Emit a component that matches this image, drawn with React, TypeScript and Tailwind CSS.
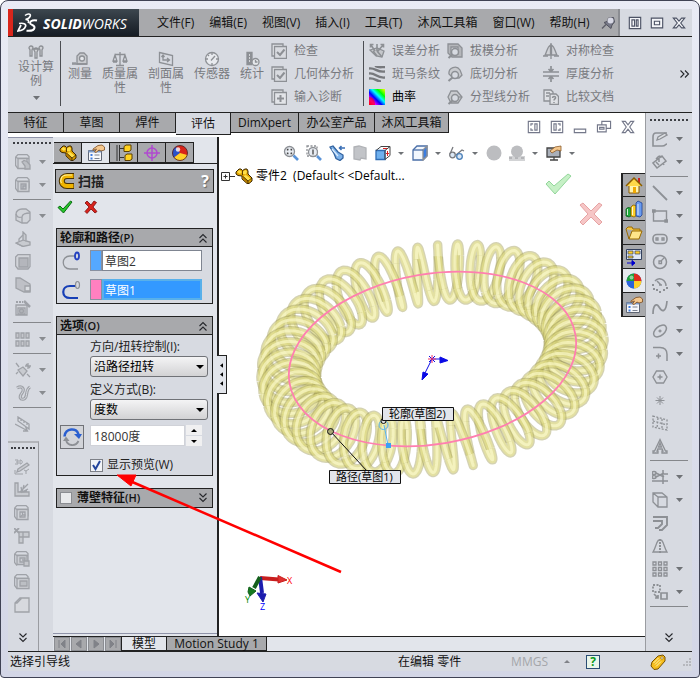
import type { ReactNode } from 'react';

const FONT = "font-['Open_Sans','Noto_Sans_CJK_SC',sans-serif]";

interface IconProps {
  children: ReactNode;
  className?: string;
  color?: string;
}

const Icon = ({ children, className = 'w-4 h-4', color = '#8d9095' }: IconProps) => (
  <svg viewBox="0 0 16 16" className={`${className} shrink-0`} fill="none" stroke={color} strokeWidth="1.3">
    {children}
  </svg>
);

const Caret = () => (
  <svg viewBox="0 0 7 4" className="w-[7px] h-1 shrink-0" fill="#6f7276">
    <path d="M0 0h7L3.5 4z" />
  </svg>
);

const DoubleChevron = ({ up = false }: { up?: boolean }) => (
  <svg viewBox="0 0 10 10" className="w-2.5 h-2.5 shrink-0" fill="none" stroke="#26282c" strokeWidth="1.1">
    {up ? <path d="M1.5 5L5 1.5 8.5 5M1.5 9.5L5 6l3.5 3.5" /> : <path d="M1.5.5L5 4 8.5.5M1.5 5L5 8.500l3.500-3.500" />}
  </svg>
);

/* ---------- shared drawings ---------- */

const PartGlyph = () => (
  <svg viewBox="0 0 18 16" className="w-[18px] h-4 shrink-0" strokeLinejoin="round">
    <path d="M1 4l3-3h2l1.500 1.500L10 1h2l1 2v3l4 4v3l-3 2.500h-2L7 11V8L3 7.500 1 6z" fill="#e0a200" stroke="#3b2600" />
    <path d="M2 4l2.500-2 2.500 2-2 2zM8 3.500L10.500 2l1.500 1.500-1 3-3-.5zM8 8l3-1 5 4-2.500 2z" fill="#ffe04a" />
    <path d="M13 13v2.500L7.500 11V8.500z" fill="#b57c00" />
    <path d="M7.500 3v4M7.500 8l5.500 5v2.500M13 13l4-3" fill="none" stroke="#3b2600" strokeWidth=".8" />
  </svg>
);

const HandSheet = () => (
  <svg viewBox="0 0 18 18" className="w-[18px] h-[18px] shrink-0" strokeWidth="1">
    <path d="M1.500 6.500h13v10h-13z" fill="#f7f8fb" stroke="#5f6674" />
    <path d="M1.500 6.500h13v2h-13z" fill="#7f9cc8" />
    <path d="M3.500 10h2v2h-2zM3.500 13.500h2v2h-2z" fill="#3d7be0" />
    <path d="M7.500 11h5M7.500 14.500h5" stroke="#7b8290" />
    <path d="M6 5l5-3.500 4-.5 2.500 2v3l-3.500 1-2-1-3 2.500-1.500-.5 2-3-2 .5-1.500 1z" fill="#f5c88e" stroke="#7a4a1d" strokeWidth=".8" />
  </svg>
);

const Beachball = () => (
  <svg viewBox="0 0 18 18" className="w-[18px] h-[18px] shrink-0">
    <circle cx="9" cy="9" r="7.500" fill="#2f6fe0" />
    <path d="M9 9L9 1.500A7.500 7.500 0 0 0 1.500 9z" fill="#1fa037" />
    <path d="M9 9V1.500A7.500 7.500 0 0 1 16.500 9z" fill="#e02b1d" />
    <path d="M9 9H1.500A7.500 7.500 0 0 0 9 16.500z" fill="#2b62d9" />
    <path d="M9 9h7.500A7.500 7.500 0 0 1 9 16.500z" fill="#ffd028" />
    <circle cx="6.500" cy="5.500" r="2" fill="#fff" opacity=".5" />
  </svg>
);

const TricolorBall = () => (
  <svg viewBox="0 0 18 18" className="w-[18px] h-[18px] shrink-0">
    <circle cx="9" cy="9" r="7.500" fill="#d8241a" />
    <path d="M9 9L5 2.700A7.500 7.500 0 0 0 3 13.500z" fill="#2b52c9" />
    <path d="M9 9l7.300 2A7.500 7.500 0 0 1 3 13.500z" fill="#ffd028" />
    <circle cx="9" cy="9" r="7.500" fill="none" stroke="#4a2020" strokeWidth=".8" />
    <circle cx="7" cy="5.500" r="2.200" fill="#fff" opacity=".8" />
  </svg>
);

/* ---------- title bar ---------- */

const menus = ['文件(F)', '编辑(E)', '视图(V)', '插入(I)', '工具(T)', '沐风工具箱', '窗口(W)', '帮助(H)'];

const TitleBar = () => (
  <header className="flex h-7 bg-[#a8a9ac] border-b border-[#222] shrink-0">
    <div className="flex items-center w-[131px] shrink-0 border-l-[5px] border-[#d9261c] bg-linear-to-b from-[#3d474f] to-[#161c24] text-white">
      <svg viewBox="0 0 22 22" className="w-[22px] h-[22px] ml-1 shrink-0" fill="none" stroke="#fff">
        <path d="M8 3.500C10.500 1.500 14 1.500 13.300 4 12.800 5.800 10.500 7 8.500 7.500c3 0 3.800 1.500 2.500 3.500" strokeWidth="1.600" />
        <path d="M2 11.500c4.500-.7 7.500.3 6.500 3C7.500 17.300 4 18.800 1 19l3-6" strokeWidth="1.700" />
        <path d="M20 8.500c-3-.8-6.500 0-7 2.200-.5 2.300 5 2.200 4.500 5-.4 2.500-4 3.300-8 3" strokeWidth="2" />
      </svg>
      <span className="ml-1 font-['Open_Sans'] italic text-sm leading-none pt-0.5 whitespace-nowrap">
        <b>SOLID</b>WORKS
      </span>
    </div>
    <nav className="flex items-center gap-[15px] pl-[18px] flex-1 whitespace-nowrap">
      {menus.map((menu) => (
        <button key={menu} className="text-[#111]">{menu}</button>
      ))}
      <svg viewBox="0 0 14 14" className="w-3.5 h-3.5 -ml-1 shrink-0">
        <path d="M1 12.500l4-4" stroke="#5d5e68" strokeWidth="1.500" />
        <path d="M3 6.500l3-1L7.500 2l5-.5 1 4.500-2.500 3-1 3.500z" fill="#777988" stroke="#53545f" />
        <circle cx="9.500" cy="4.500" r="3" fill="#d7d8e4" />
      </svg>
    </nav>
    <div className="flex items-center justify-around w-[74px] px-2 gap-2 shrink-0 bg-[#d7dae1] border-l-2 border-[#8b8d92]">
      <Icon className="w-3.5 h-3.5" color="#4d5365">
        <path d="M1.500 1.500h13v13h-13zM4.500 4.500h3v7h-3zM9.500 4.500h2v7h-2z" fill="#f4f5f8" />
      </Icon>
      <Icon className="w-3.5 h-3.5" color="#4d5365">
        <path d="M1.500 2.500h13v11h-13zM5 6h6v4H5z" fill="#f4f5f8" />
      </Icon>
      <Icon className="w-3.5 h-3.5" color="#4d5365">
        <path d="M1.500 2.500h3.500L8 5.800l3-3.300h3.500L10 8l4.500 5.500H11L8 10.200 5 13.500H1.500L6 8z" fill="#f4f5f8" />
      </Icon>
    </div>
  </header>
);

/* ---------- ribbon ---------- */

const magnifier = (
  <>
    <circle cx="8" cy="9" r="3.500" fill="#d7dae1" strokeWidth="1.500" />
    <path d="M5.500 11.500L1.500 15" strokeWidth="2" />
  </>
);

const bigTools: { label: string; width: string; icon: ReactNode }[] = [
  { label: '测量', width: 'w-[38px]', icon: <><path d="M5 13V5l3-3h4l3 3v8z" fill="#c9cbcf" /><circle cx="10" cy="7.500" r="2.500" fill="#e4e6ea" /><path d="M0 13h15M1 11v2M3 11v2" /></> },
  { label: '质量属性', width: 'w-[42px]', icon: <path d="M8 1v13M3 3.500h10M4 14.500h8M3 4L1 10h4zM13 4l-2 6h4zM1 11h4M11 11h4" /> },
  { label: '剖面属性', width: 'w-[50px]', icon: <path d="M1.500 1.500l13 3v10l-13-3zM5 5v4h6M9 7l2.500 2L9 11M3.500 6L5 4l1.500 2" /> },
  { label: '传感器', width: 'w-[42px]', icon: <><circle cx="8" cy="8" r="6.500" fill="#e8eaee" /><path d="M7 9.500L11 5M8 2v2M2 8h2M12 8h2M4 4l1 1M8 12v2" /></> },
  { label: '统计', width: 'w-[38px]', icon: <><path d="M3 1.500h5v12H3z" fill="#8d9095" /><path d="M5 4h1M5 7h1M5 10h1" stroke="#e6e8ec" /><circle cx="11.500" cy="11" r="3.500" fill="#e6e8ec" /><path d="M11.500 9v2h2" /></> },
];

const checkBoxIcon = <><path d="M1 1h11v12H1z" fill="#e2e4e8" /><path d="M3.500 3.500h12v12h-12z" fill="#d9dbe0" /><path d="M6 9l3 3 4.500-5.500" strokeWidth="2" /></>;

const ribbonGroups: { width: string; items: { label: string; icon: ReactNode; on?: boolean }[] }[] = [
  {
    width: 'w-[92px]',
    items: [
      { label: '检查', icon: checkBoxIcon },
      { label: '几何体分析', icon: checkBoxIcon },
      { label: '输入诊断', icon: <><path d="M1 1h11v12H1z" fill="#e2e4e8" /><path d="M3.500 3.500h12v12h-12z" fill="#e2e4e8" /><path d="M9.500 6v7M6 9.500h7" strokeWidth="2" /></> },
    ],
  },
  {
    width: 'w-[84px]',
    items: [
      { label: '误差分析', icon: <><path d="M1 7l7-2 7 3-2 6-6-1z" fill="#c5c7cb" /><path d="M2 2l4 6M1.500 4.500V1.500h3M14 2L9 8M14.500 4.500V1.500h-3M8 8l5 6M4 8l4 5M8 1v7" strokeWidth="1.600" /></> },
      { label: '斑马条纹', icon: <path d="M0 2.500c7-1 7 4 16 3M0 7.500c7-1 7 5 16 4M0 12.500c6-1 7 3 12 3M6 0c4 2 6 1 10 1" stroke="#77797d" strokeWidth="2.400" /> },
      {
        label: '曲率',
        on: true,
        icon: (
          <>
            <defs>
              <linearGradient id="curv" x1="0" y1="1" x2="1" y2="0">
                <stop offset="0" stopColor="#f00" />
                <stop offset=".2" stopColor="#f0f" />
                <stop offset=".4" stopColor="#00f" />
                <stop offset=".58" stopColor="#0ff" />
                <stop offset=".75" stopColor="#0f0" />
                <stop offset="1" stopColor="#ff0" />
              </linearGradient>
            </defs>
            <path d="M0 0h16v16H0z" fill="url(#curv)" stroke="none" />
            <path d="M0 8c4 0 6 3 6 8H0z" fill="#f00" stroke="none" opacity=".6" />
          </>
        ),
      },
    ],
  },
  {
    width: 'w-[96px]',
    items: [
      { label: '拔模分析', icon: <><path d="M1 1h10l4 4v9H5L1 10z" fill="#b4b6ba" /><path d="M4 4h7v7H4z" fill="#dcdee2" />{magnifier}</> },
      { label: '底切分析', icon: <><path d="M2 8a6 6 0 0 1 11-4l2 5-3 3H6z" fill="#c9cbcf" />{magnifier}</> },
      { label: '分型线分析', icon: <><path d="M1 8l3-6h6l5 6-4 6H4z" fill="#c9cbcf" /><path d="M11 8h4" />{magnifier}</> },
    ],
  },
  {
    width: 'w-[96px]',
    items: [
      { label: '对称检查', icon: <><path d="M7.500 2C4 4 4 9 2 12h5.500zM8.500 2c3.500 2 3.500 7 5.500 10H8.500z" fill="#d0d2d7" /><path d="M8 0v16M0 13h5M11 13h5" /></> },
      { label: '厚度分析', icon: <path d="M0 6h16M0 10h16M8 0v5M8 11v5M5.500 3L8 5.500 10.500 3M5.500 13L8 10.500l2.500 2.500" strokeWidth="1.700" /> },
      { label: '比较文档', icon: <><path d="M1 1h7l2 2v9H1z" fill="#dfe1e5" /><path d="M7 5h6l2.500 2.500V15.500H7z" fill="#dfe1e5" /><path d="M3 4h4M3 7h3M9.500 9c0-2 3.500-2 3 0-.2 1-1.500 1-1.500 2.500M11 13v1" strokeWidth="1.500" /></> },
    ],
  },
];

const Ribbon = () => (
  <section className="flex h-[76px] shrink-0 pt-1 bg-[#d7dae1] border-b border-[#222] text-[#77797e]">
    <button className="flex flex-col items-center w-[53px] h-[65px] pt-[3px] pl-1 leading-[14px] border-r border-[#4b4d52] shrink-0">
      <Icon><path d="M1 4a2 2 0 1 1 4 0L4 6v6H2V6zM6 6a2 2 0 1 1 4 0L9 8v6H7V8zM11 4a2 2 0 1 1 4 0l-1 2v6h-2V6zM5 5h6" fill="#d0d2d6" /></Icon>
      <span className="w-9">设计算例</span>
      <span className="mt-2"><Caret /></span>
    </button>
    <div className="flex pt-2.5 leading-[14px]">
      {bigTools.map((tool) => (
        <button key={tool.label} className={`${tool.width} flex flex-col items-center justify-start shrink-0 px-px text-center whitespace-normal`}>
          <Icon>{tool.icon}</Icon>
          <span className="w-9 whitespace-normal">{tool.label}</span>
        </button>
      ))}
    </div>
    {ribbonGroups.map((group, index) => (
      <div key={index} className={`${group.width} flex flex-col h-[65px] justify-between shrink-0 ${index === 1 ? 'border-l border-[#4b4d52] pl-[5px]' : ''}`}>
        {group.items.map((item) => (
          <button key={item.label} className={`flex items-center gap-[7px] leading-[19px] whitespace-nowrap ${item.on ? 'text-black' : ''}`}>
            <Icon>{item.icon}</Icon>
            {item.label}
          </button>
        ))}
      </div>
    ))}
    <button aria-label="More" className="ml-auto mr-0.5 mb-1.5 self-center -rotate-90">
      <DoubleChevron />
    </button>
  </section>
);

/* ---------- command tabs ---------- */

const tabs = ['特征', '草图', '焊件', '评估', 'DimXpert', '办公室产品', '沐风工具箱'];
const tabWidths = ['w-14', 'w-14', 'w-14', 'w-[55px]', 'w-[68px]', 'w-[76px]', 'w-[74px]'];

const CommandTabs = () => (
  <div className="flex items-start h-6 shrink-0 bg-white">
    {tabs.map((tab, index) => (
      <button
        key={tab}
        className={`${tabWidths[index]} shrink-0 whitespace-nowrap text-[#111] border-r border-b border-[#222] ${
          index === 3 ? 'h-[22px] bg-[#d7dae1]' : 'h-5 bg-[#a8a9ac]'
        }`}
      >
        {tab}
      </button>
    ))}
    <div className="ml-auto mr-2.5 flex items-end gap-[9px] pt-[7px]">
      <Icon className="w-3.5 h-3.5" color="#74788a"><path d="M1.500 1.500h13v13h-13zM7 4.500H4.500v2M4.500 9.500v2H7M9 4.500h2.500v7H9z" /></Icon>
      <Icon className="w-3.5 h-3.5" color="#74788a"><path d="M1.500 1.500h13v13h-13zM7 4.500H4.500v7H7zM9 4.500h2.500v2M11.500 9.500v2H9" /></Icon>
      <Icon className="w-3.5 h-3.5" color="#74788a"><path d="M1.500 10.500h13v4h-13z" /></Icon>
      <Icon className="w-4 h-3.5" color="#74788a"><path d="M5.500 5.500v-4h10v8h-5M.5 5.500h10v8H.5zM3 8.500h5v2H3z" /></Icon>
      <Icon className="w-3.5 h-3.5" color="#74788a"><path d="M1.500 1.500h3.500L8 5.500l3-4h3.500L10 8l4.500 6.500H11L8 10.500l-3 4H1.500L6 8z" /></Icon>
    </div>
  </div>
);

/* ---------- side toolbars ---------- */

interface Tool {
  icon: ReactNode;
  menu?: boolean;
}

const cube = <><path d="M.6 3l2.400-2.400h9L14 2.600v9" /><path d="M.6 3v8.500l2.400 3M.6 3L3 4.500M3 4.500h11" /></>;

const leftTools: Tool[][] = [
  [
    { icon: <>{cube}<path d="M3 4.500h9v10H3z" fill="#d0d2d7" /><path d="M7 8l2-1.500 3 1L15 11v4h-5v-3z" fill="#b4b6bb" /></>, menu: true },
    { icon: <>{cube}<path d="M3 4.500h11v10H3z" fill="#d0d2d7" /><path d="M6 7h5v5H6zM8 9h3v3H8z" fill="#b9bbc0" /></>, menu: true },
  ],
  [
    { icon: <><path d="M1 6C1 3 4 1 7 1h4l4 3v8l-3 3H7l-6-3z" fill="#d0d2d7" /><path d="M7 15V9c0-3 4-4 8-4M1 6c1 3 3 4 6 3" /></>, menu: true },
    { icon: <><path d="M1 12l7-3V1l3 3v6l4 1v3l-7 1.500z" fill="#c4c6cb" /><path d="M8 9l3 1M1 12l7 3.500M4 10.500V8l4-4" /></> },
    { icon: <><path d="M.6 3l2.400-2.400h12v12L13 15H3l-2.400-3z" fill="#d0d2d7" /><path d="M4 4h9v9H4z" fill="#a9abb0" /></> },
    { icon: <><path d="M1 1h4l10 6v8H9L1 11z" fill="#b6b8bd" /><path d="M10 9h5v5h-5z" fill="#dcdee2" /></> },
    { icon: <><path d="M1 5h11v10H1zM3 8h7v6H3z" fill="#d0d2d7" /><circle cx="6.500" cy="11" r="2" fill="#a4a6ab" /><path d="M9 1l6 6" strokeWidth="2.500" /><path d="M1 2h2M4 2h2M7 2h1" strokeWidth="2" /></> },
  ],
  [
    { icon: <path d="M1 2h3v5H1zM6 2h3v5H6zM11 2h3v5h-3zM1 10h3v5H1zM6 10h3v5H6zM11 10h3v5h-3z" fill="#bfc1c6" />, menu: true },
  ],
  [
    { icon: <><path d="M3 8l5-3 4 4-4 5z" fill="#c4c6cb" /><path d="M1 1l3 4M12 12l3 3M13 1v6M10 4h6M11 2l4 4M1 12l2-2" /></>, menu: true },
    { icon: <><path d="M2 3c5-3 8 1 5 5s-2 7 2 6 1-9 6-12" strokeWidth="3.200" /><path d="M2 3c5-3 8 1 5 5s-2 7 2 6 1-9 6-12" stroke="#d7dae1" strokeWidth="1" /></>, menu: true },
  ],
  [{ icon: <path d="M3 1v4l11 8V8zM6 3v2M9 5v2M12 7v2M0 8l12 6.500M8 15h4.500l-2-4" /> }],
];

const sketchTools: Tool[] = [
  { icon: <><path d="M4 10l9-6 2 2-9 6-3 1z" fill="#c4c6cb" /><path d="M1 11v4h8M12 15v-3l3-2M12 12l-2-1M1 1h3v4H1M2 3h2M6 1v4c3 0 3-4 0-4" strokeWidth="1" /></> },
  { icon: <><path d="M1 1h3v9h11v4H1z" fill="#c4c6cb" /><path d="M6 10l8-8M7 5l1 5 5-1M10 3l-2 7 6-3" /></> },
  { icon: <>{cube}<path d="M3 4.500h11v10H3zM6 7h5v5H6z" fill="#d0d2d7" /><path d="M8.500 7v3h3M8.500 10L6 12" /></> },
  { icon: <><path d="M5 4h4v5H5zM9 4h6v5H9zM5 9h4v6H5z" fill="#c4c6cb" /><path d="M0 0l5 5M5 0L0 5" strokeWidth="1.800" /></> },
  { icon: <>{cube}<path d="M3 4.500h10v9H3zM6 7h5v4H6z" fill="#c9cbd0" /><path d="M10 10h5v5h-5zM8 9h3" fill="#bfc1c6" /></> },
  { icon: <>{cube}<path d="M3 4.500h12v10H3z" fill="#d0d2d7" /><path d="M6 7h7v5H6z" fill="#b4b6bb" /></> },
  { icon: <path d="M1 6l5-5h9v14H1zM1 6l2 0 4-4V1" fill="#d7d9dd" /> },
];

const rightTools: Tool[][] = [
  [
    { icon: <><path d="M15 2H4C1 2 1 4 1 6v9h9c4 0 3-2 5-2" strokeWidth="1.600" /><path d="M5 9l1-3 7-4 2 2-7 4z" fill="#dddfe3" /></>, menu: true },
    { icon: <path d="M1 9l4 5 9-7-4-5zM4 8l3 3M7 8V5M10 3l-3-1M11 9l1 2M4 5l3-3" strokeWidth="1.500" />, menu: true },
  ],
  [
    { icon: <path d="M1 1l14 14" strokeWidth="1.800" />, menu: true },
    { icon: <path d="M1.500 3h13v10h-13zM0 2h3v2H0zM13 12h3v2h-3z" strokeWidth="1.400" />, menu: true },
    { icon: <><rect x="1" y="3.500" width="14" height="9" rx="4" strokeWidth="1.600" /><path d="M4 7h2v2H4zM10 7h2v2h-2z" /></>, menu: true },
    { icon: <><circle cx="8" cy="8" r="6.500" strokeWidth="1.500" /><path d="M7 7h2.500v2.500H7zM9 7l3-3" /></>, menu: true },
    { icon: <><path d="M3 4c4-5 11-1 11 5M5 4l4 4M7 8h3" strokeWidth="1.500" /><path d="M0 8h2M1 12h2M4 13h2M7 15h2M11 13h2M14 11h2" strokeWidth="2" /></>, menu: true },
    { icon: <path d="M1 14c0-8 3-12 6-7s7 6 8-6" strokeWidth="1.700" />, menu: true },
    { icon: <><ellipse cx="8" cy="8" rx="7.500" ry="4.500" transform="rotate(-40 8 8)" strokeWidth="1.500" /><path d="M6.500 8h3M8 6.500v3" /></>, menu: true },
    { icon: <path d="M1 1.500h7c5 0 7 3 7 7V15M4 10h5M6.500 7.500v5" strokeWidth="1.500" />, menu: true },
    { icon: <path d="M4.500 2h7L15 8l-3.500 6h-7L1 8zM8 5.500v5M5.500 8h5" strokeWidth="1.400" /> },
    { icon: <path d="M8 4v9M3.500 8.500h9M5 5.500l6 6M11 5.500l-6 6" strokeWidth="1" /> },
    { icon: <path d="M1 1l14 4v10L1 12zM1 6l14 4M6 3l-1 10M10 4v10" strokeDasharray="2 1.500" /> },
    { icon: <path d="M8 1.500L2.500 13H1v2h5v-2H5l.8-2h4.400l.8 2h-1v2h5v-2h-1.500zM8 5l1.500 4h-3z" strokeWidth="1.300" /> },
  ],
  [
    { icon: <path d="M0 4a2 1.500 0 1 0 4 0 2 1.500 0 1 0-4 0M0 8a2 1.500 0 1 0 4 0 2 1.500 0 1 0-4 0M4 4l8 4M4 8l8-4M11 1v14M0 12h16M12 5h4" strokeWidth="1.500" />, menu: true },
    { icon: <path d="M1 1h9l5 4v10H6l-5-5zM6 5h9M6 5v10M6 5L1 1" strokeWidth="1.300" />, menu: true },
    { icon: <path d="M1 2h14v8l-5 5H7M1 6h9v3l-4 4H3" strokeWidth="1.900" /> },
    { icon: <><path d="M6.500 2C4 5 4 9 1 14h6M9.500 2C12 5 12 9 15 14H9M6.500 2h3" /><path d="M8 1v15" strokeDasharray="2 1" strokeWidth="2" /></> },
    { icon: <path d="M1 1h3v3H1zM6.500 1h3v3h-3zM12 1h3v3h-3zM1 6.500h3v3H1zM6.500 6.500h3v3h-3zM12 6.500h3v3h-3zM1 12h3v3H1zM6.500 12h3v3h-3zM12 12h3v3h-3z" />, menu: true },
    { icon: <><path d="M1 1h7v7H1z" strokeDasharray="2 1.500" strokeWidth="1.800" /><path d="M9 9h6v6H9zM2 10l4 4M6 11v3H3" strokeWidth="1.700" /></>, menu: true },
  ],
];

const ToolButton = ({ tool }: { tool: Tool }) => (
  <button className="flex items-center justify-between w-[31px] h-[23px]">
    <Icon>{tool.icon}</Icon>
    {tool.menu && <Caret />}
  </button>
);

const ToolStack = ({ groups, faded = false }: { groups: Tool[][]; faded?: boolean }) => (
  <div className={`flex flex-col items-center gap-[3px] ${faded ? '[&_svg]:opacity-75' : ''}`}>
    {groups.map((group, index) => (
      <div key={index} className={index > 0 ? 'w-[38px] flex flex-col pl-0.5 border-t border-[#85878b] pt-1' : 'w-[38px] flex flex-col pl-0.5'}>
        {group.map((tool, i) => (
          <ToolButton key={i} tool={tool} />
        ))}
      </div>
    ))}
  </div>
);

const Grip = ({ width }: { width: string }) => <div className={`${width} border-t-2 border-dotted border-[#3d3f44] mx-auto shrink-0`} />;

const LeftToolbars = () => (
  <aside className="flex flex-col w-[45px] shrink-0 bg-[#d7dae1]">
    <div className="pt-1 pl-0.5 border-t border-[#8f93a8] h-[304px] shrink-0">
      <Grip width="w-[38px]" />
      <div className="pt-1.5"><ToolStack groups={leftTools} faded /></div>
    </div>
    <div className="flex-1 flex flex-col w-[31px] border-t-2 border-r border-t-[#b3b5ba] border-r-[#9a9ca1] pt-1 pb-2">
      <Grip width="w-[24px]" />
      <div className="flex flex-col w-full pl-1.5 pt-1.5 [&_svg]:opacity-75">
        {sketchTools.map((tool, i) => (
          <ToolButton key={i} tool={tool} />
        ))}
      </div>
      <div className="mt-auto mx-auto"><DoubleChevron /></div>
    </div>
  </aside>
);

/* ---------- property manager ---------- */

const ManagerTab = ({ children, active = false }: { children: ReactNode; active?: boolean }) => (
  <button className={`flex items-center justify-center w-7 h-[21px] border-t border-r border-[#222] ${active ? 'bg-[#e2e5eb]' : 'bg-[#a8a9ac] border-b'}`}>
    {children}
  </button>
);

const GroupHeader = ({ children, open = true }: { children: ReactNode; open?: boolean }) => (
  <div className={`flex items-center justify-between h-[18px] pl-[3px] pr-1 bg-[#a8a9ac] text-[#111] ${open ? 'border-b border-[#222]' : ''}`}>
    {children}
    <DoubleChevron up={open} />
  </div>
);

const PropertyManager = () => (
  <section className="relative flex flex-col w-[166px] shrink-0 bg-[#e2e5eb] border-r-2 border-[#222]">
    <div className="flex mt-[5px] pl-px border-b border-[#222] h-[22px] shrink-0">
      <ManagerTab><PartGlyph /></ManagerTab>
      <ManagerTab active><HandSheet /></ManagerTab>
      <ManagerTab>
        <svg viewBox="0 0 18 18" className="w-[18px] h-[18px]">
          <path d="M2 1v16M4.500 1v16M4 4.500h5M4 13.500h5" stroke="#333" fill="none" />
          <path d="M9 2.500l2-1.500h5v5l-2 1.500H9zM10 11.500l2-1.500h5v5l-2 1.500h-5z" fill="#ffd21f" stroke="#5b3f00" />
        </svg>
      </ManagerTab>
      <ManagerTab>
        <svg viewBox="0 0 18 18" className="w-[18px] h-[18px]" fill="none" stroke="#b04ad0" strokeWidth="1.500">
          <circle cx="9" cy="9" r="5" />
          <path d="M9 1v16M1 9h16" />
        </svg>
      </ManagerTab>
      <ManagerTab><TricolorBall /></ManagerTab>
    </div>
    <div className="flex items-center mx-0.5 mt-[5px] mr-[3px] h-6 pl-0.5 pr-1 gap-0.5 border border-[#222] bg-[#a8a9ac] shrink-0">
      <svg viewBox="0 0 18 18" className="w-[18px] h-[18px]" fill="none">
        <path d="M16 4H9C2 4 2 14 9 14h7" stroke="#4a3200" strokeWidth="6" />
        <path d="M15.500 4H9C2 4 2 14 9 14h6.500" stroke="#f0b400" strokeWidth="4" />
        <path d="M14 3H9C2.500 3 2 9 3.500 11" stroke="#fff09a" strokeWidth="1.200" />
      </svg>
      <b className="text-[13px] text-[#222]">扫描</b>
      <b className="ml-auto text-base leading-none text-white [text-shadow:1px_1px_1px_#666]">?</b>
    </div>
    <div className="flex gap-2.5 pl-1 pt-[6px] h-[35px] shrink-0">
      <button aria-label="OK" className="self-start">
        <svg viewBox="0 0 16 16" className="w-4 h-4"><path d="M1 8.500l2-1.500 3 3L13.500 2 15 3 6.500 14z" fill="#27c52b" stroke="#096b10" /></svg>
      </button>
      <button aria-label="Cancel" className="self-start">
        <svg viewBox="0 0 16 16" className="w-4 h-4"><path d="M2 4l2-2 4 4 3-4 2.500 1.500L10 8l4 4.500-2 1.500-4-4-4 4.500L2 12.500 6 8z" fill="#d9231c" stroke="#7c0a08" strokeWidth=".8" /></svg>
      </button>
    </div>

    <div className="mx-[3px] mr-1 border border-[#222] bg-[#d7dae1] shrink-0">
      <GroupHeader><b>轮廓和路径<span className="font-semibold text-[11px]">(P)</span></b></GroupHeader>
      <label className="flex items-center mt-[3px] mr-2.5">
        <svg viewBox="0 0 20 20" className="w-5 h-5 ml-1 mr-[9px]" fill="none">
          <path d="M14 5H9C0 5 0 18 9 18h8" stroke="#8d9095" strokeWidth="1.300" />
          <ellipse cx="16" cy="5" rx="2" ry="3.500" stroke="#2340c0" strokeWidth="1.800" />
        </svg>
        <span className="w-3 h-[21px] bg-[#55a8ff] border border-[#8890a0]" />
        <input defaultValue="草图2" className="flex-1 min-w-0 h-[21px] pl-0.5 bg-white border border-[#7f8591] text-[#333]" />
      </label>
      <label className="flex items-center mt-2 mb-[3px] mr-2.5">
        <svg viewBox="0 0 20 20" className="w-5 h-5 ml-1 mr-[9px]" fill="none">
          <path d="M15 6H9C0 6 0 18 9 18h8" stroke="#173fb6" strokeWidth="2.200" />
          <ellipse cx="16.500" cy="5" rx="2" ry="3.500" stroke="#8d9095" strokeWidth="1.200" />
        </svg>
        <span className="w-3 h-[21px] bg-[#ff80c0] border border-[#8890a0]" />
        <input defaultValue="草图1" className="flex-1 min-w-0 h-[21px] pl-px bg-[#3399ff] border-2 border-[#58b0ea] text-white" />
      </label>
    </div>

    <div className="mx-[3px] mr-1 mt-3 border border-[#222] bg-[#d7dae1] shrink-0">
      <GroupHeader><b>选项<span className="font-semibold text-[11px]">(O)</span></b></GroupHeader>
      <div className="flex flex-col pl-[33px] pr-1 pt-[3px] text-[#222]">
        <label htmlFor="twist" className="leading-[18px]">方向/扭转控制(I):</label>
        <div className="relative">
          <select id="twist" className="appearance-none block w-full h-[21px] pl-[3px] rounded-[3px] border border-[#707277] bg-linear-to-b from-[#f4f4f5] to-[#d2d2d4] text-black">
            <option>沿路径扭转</option>
          </select>
          <svg viewBox="0 0 8 4" className="absolute right-1 top-[9px] w-2 h-1"><path d="M0 0h8L4 4z" /></svg>
        </div>
        <label htmlFor="define" className="mt-1 leading-[18px]">定义方式(B):</label>
        <div className="relative">
          <select id="define" className="appearance-none block w-full h-[21px] pl-[3px] rounded-[3px] border border-[#707277] bg-linear-to-b from-[#f4f4f5] to-[#d2d2d4] text-black">
            <option>度数</option>
          </select>
          <svg viewBox="0 0 8 4" className="absolute right-1 top-[9px] w-2 h-1"><path d="M0 0h8L4 4z" /></svg>
        </div>
      </div>
      <div className="flex items-start mt-[5px] pl-[3px] pr-2.5">
        <button aria-label="Reverse" className="flex items-center justify-center w-6 h-6 border border-[#707277] bg-[#d2d4d9] shrink-0">
          <svg viewBox="0 0 20 20" className="w-5 h-5" fill="none">
            <path d="M2.500 9.500C3 1 15 0 16.500 7.500" stroke="#2a5fd0" strokeWidth="2.600" />
            <path d="M12 7h8l-3 5z" fill="#2a5fd0" />
            <path d="M16.500 14c-3 6-11 5-12.500-1" stroke="#8d9095" strokeWidth="1.800" />
            <path d="M1 14h6.500L4 9.500z" fill="#8d9095" />
          </svg>
        </button>
        <input aria-label="度数" defaultValue="18000度" className="ml-1.5 flex-1 min-w-0 h-[21px] pl-[3px] bg-white border border-[#d0d2d8] text-[#333]" />
        <div className="flex flex-col gap-px ml-px w-4 shrink-0">
          <button aria-label="Up" className="flex items-center justify-center h-2.5 bg-[#f0f0f1] text-[#333]">
            <svg viewBox="0 0 6 3" className="w-1.5 h-[3px]"><path d="M0 3h6L3 0z" /></svg>
          </button>
          <button aria-label="Down" className="flex items-center justify-center h-2.5 bg-[#f0f0f1] text-[#333]">
            <svg viewBox="0 0 6 3" className="w-1.5 h-[3px]"><path d="M0 0h6L3 3z" /></svg>
          </button>
        </div>
      </div>
      <label className="flex items-center gap-1 pl-[33px] mt-[7px] mb-px text-[#222] leading-[18px]">
        <input
          type="checkbox"
          defaultChecked
          className="peer appearance-none w-[13px] h-[13px] bg-[#f2f4f8] border border-[#7d8087] shrink-0"
        />
        <svg viewBox="0 0 11 11" className="hidden peer-checked:block w-[11px] h-[11px] -ml-4 shrink-0 relative" fill="none">
          <path d="M2 5l2.500 4L9 1" stroke="#24459c" strokeWidth="2" />
        </svg>
        <span className="ml-px">显示预览(W)</span>
      </label>
    </div>

    <div className="mx-[3px] mr-1 mt-3 border border-[#222] shrink-0">
      <GroupHeader open={false}>
        <label className="flex flex-1 items-center gap-[5px]">
          <input type="checkbox" className="appearance-none w-3 h-3 bg-[#e9eaec] border border-[#8b8d92]" />
          <b>薄壁特征<span className="font-semibold text-[11px]">(H)</span></b>
        </label>
      </GroupHeader>
    </div>
    <div className="mt-auto border-t border-[#8f93a8] h-[3px]" />

    <button aria-label="Collapse" className="absolute left-[164px] top-[218px] z-10 flex flex-col items-center justify-center gap-1 w-2.5 h-[39px] bg-[#e2e5eb] border border-l-0 border-[#222]">
      {[0, 1, 2].map((i) => (
        <svg key={i} viewBox="0 0 4 6" className="w-[3px] h-[5px]"><path d="M4 0v6L0 3z" /></svg>
      ))}
    </button>
  </section>
);

/* ---------- graphics area ---------- */

const CENTER = { x: 432.5, y: 359 };
const RING = 145;
const COIL = 28;
const TURNS = 50;
const TILT = 0.5846;
const RISE = Math.sqrt(1 - TILT * TILT);
const AXIS_U = [0.986, -0.168];
const AXIS_V = [0.168, 0.986];
const START = 1.954;

const project = (theta: number, radial: number, axial: number) => {
  const u = (RING + radial) * Math.cos(theta);
  const w = (RING + radial) * Math.sin(theta);
  const v = w * TILT - axial * RISE;
  return {
    x: CENTER.x + u * AXIS_U[0] + v * AXIS_V[0],
    y: CENTER.y + u * AXIS_U[1] + v * AXIS_V[1],
    depth: w * RISE + axial * TILT,
  };
};

// every turn is cut in half-turn strands, drawn back to front
const strands = Array.from({ length: TURNS * 2 }, (_, n) => {
  const points = Array.from({ length: 19 }, (_, k) => {
    const phi = n * Math.PI + (k / 18) * Math.PI;
    return project(START + phi / TURNS, COIL * Math.cos(phi), COIL * Math.sin(phi));
  });
  return {
    depth: points.reduce((sum, p) => sum + p.depth, 0) / points.length,
    d: 'M' + points.map((p) => `${p.x.toFixed(1)} ${p.y.toFixed(1)}`).join('L'),
  };
}).sort((a, b) => a.depth - b.depth);

const Coil = () => (
  <g fill="none" strokeLinejoin="round">
    {strands.map((strand, i) => (
      <g key={i}>
        <path d={strand.d} stroke="#98944a" strokeWidth="9.500" opacity=".42" />
        <path d={strand.d} stroke="#f2ee92" strokeWidth="7" opacity=".5" />
        <path d={strand.d} stroke="#fffed0" strokeWidth="3" opacity=".6" />
      </g>
    ))}
    <ellipse cx="432.500" cy="359" rx="145" ry="85" transform="rotate(-9.700 432.500 359)" stroke="#ff7fb0" strokeWidth="1.800" />
  </g>
);

const Scene = () => (
  <svg viewBox="219 137 426 499" className="absolute left-0 top-0 w-[426px] h-[499px]">
    <path d="M546 184l3-3 5 5 14-12 3 2-16 18z" fill="#c6f0c6" stroke="#93d69b" />
    <path d="M580 205l3-2 8 8 8-8 3 2-8 9 8 8-3 3-8-8-8 8-3-3 8-8z" fill="#f6c6c6" stroke="#e6a3a3" />
    <Coil />
    <g stroke="#0a0ae6" fill="#0a0ae6">
      <path d="M432 359h10M432 359l-7 14" />
      <path d="M440 357v6l8-2.500zM423 372l5 2-6 6z" />
      <path d="M429 356l6 6M435 356l-6 6" />
      <path d="M432 355v8M428 359h8" stroke="#f0306a" />
    </g>
    <g fill="none">
      <circle cx="383.500" cy="425" r="4.500" stroke="#58b4f0" />
      <path d="M384 425l4 20" stroke="#58b4f0" />
      <circle cx="383.500" cy="421" r="2.500" stroke="#111" fill="#ddd" />
      <path d="M331 432l36 39" stroke="#111" />
      <circle cx="330.500" cy="431.500" r="3" stroke="#111" fill="#a9a878" />
      <path d="M386 443h5v5h-5z" fill="#3aa0f5" />
    </g>
    <g fill="#e2e5eb" stroke="#111">
      <path d="M382.500 407.500h71v13h-71zM329.500 470.500h71v13h-71z" />
    </g>
    <g fill="#000" fontSize="11">
      <text x="389" y="418">轮廓(草图2)</text>
      <text x="336" y="481">路径(草图1)</text>
    </g>
    <g strokeWidth="3">
      <path d="M260 578l19 1.500" stroke="#c81e1e" strokeWidth="4" />
      <path d="M278 575.500l9 4.500-9 3z" fill="#e03030" stroke="#c81e1e" strokeWidth="1" />
      <path d="M260 577l2 16" stroke="#1c1cae" strokeWidth="4" />
      <path d="M257 593l9 1-3 8z" fill="#1c1cae" stroke="#1c1cae" strokeWidth="1" />
      <path d="M260 577l-6 11" stroke="#14601c" strokeWidth="4" />
      <path d="M249 587l7 4-6 5-2-4z" fill="#147a1e" stroke="#14601c" strokeWidth="1" />
    </g>
    <g fontSize="9">
      <text x="287" y="584" fill="#f00">X</text>
      <text x="245" y="603" fill="#080">Y</text>
      <text x="260" y="610" fill="#00f">Z</text>
    </g>
  </svg>
);

const viewTools: Tool[] = [
  { icon: <><circle cx="6.500" cy="6.500" r="5" fill="#e8ecf2" /><path d="M4.500 5.500v-1h1M7.500 4.500h1v1M8.500 7.500v1h-1M5.500 8.500h-1v-1" stroke="#444" /><path d="M10.500 10.500l4.500 4.500" stroke="#5b94d8" strokeWidth="2.600" /></> },
  { icon: <><path d="M1 1h10v10H1z" strokeDasharray="2 1.500" /><circle cx="7" cy="7" r="4.500" fill="#e8ecf2" /><path d="M7 4.500v5" stroke="#444" /><path d="M11 11l4 4" stroke="#5b94d8" strokeWidth="2.600" /></> },
  { icon: <><path d="M1 2l3-1 5 6 5 3v3l-3 2.500-4-2-2-5z" fill="#7db2ea" stroke="#33639f" /><path d="M3 4l6 7" stroke="#dcebfb" /><path d="M16 3h-5.500M12.500 1l-2 2 2 2" stroke="#3a6fb5" strokeWidth="1.500" /></> },
  { icon: <path d="M2 2l5-1 7 2v11l-5-1-1 2-6-1z" fill="#c2c4c8" stroke="#b0b2b6" /> },
  { icon: <><path d="M1 5.500h9v9H1z" fill="#6fb0ee" stroke="#2f6cb5" /><path d="M1 5.500l5-4h9l-5 4M15 1.500v9l-5 4M10 5.500v9" stroke="#444" strokeWidth="1" /><path d="M8 3.500h4M12.500 6v5M11 8.500h3" stroke="#d22" strokeWidth="1" /></>, menu: true },
  { icon: <><path d="M1 5l4-4h10v10l-4 4H1z" fill="#f2f7fd" stroke="#4a6fa8" /><path d="M11 5l4-4v10l-4 4z" fill="#3b7de0" /><path d="M1 5h10" stroke="#4a6fa8" /></>, menu: true },
  { icon: <><path d="M1 9l3-7M7 10l6-5 2 1" stroke="#77797e" /><circle cx="3.500" cy="10" r="2.800" fill="#dbe8f6" stroke="#77797e" /><circle cx="10.500" cy="11.500" r="2.800" fill="#dbe8f6" stroke="#4a7fb8" /></>, menu: true },
  { icon: <circle cx="8" cy="8" r="7.500" fill="#bcbdc0" stroke="none" /> },
  { icon: <><path d="M0 11h16v5H0z" fill="#d2d3d5" stroke="none" /><path d="M0 12h3v2H0zM6 12h3v2H6zM12 12h3v2h-3z" fill="#b4b5b8" stroke="none" /><circle cx="8" cy="6.500" r="6" fill="#bcbdc0" stroke="none" /></>, menu: true },
  { icon: <><path d="M1 3h13v9H1z" fill="#aab0ba" stroke="#444" /><path d="M4 15h8M8 12v3" stroke="#444" /><path d="M4 6l5-4 6-1v5l-4-1-5 3z" fill="#f5c88e" stroke="#8c5a28" strokeWidth=".8" /></>, menu: true },
];

const paneTabs: ReactNode[] = [
  <svg viewBox="0 0 18 18" className="w-[18px] h-[18px]"><path d="M13 2h2v6h-2z" fill="#c22" /><path d="M4 9h10v8H4z" fill="#fff3b0" stroke="#8a5a00" /><path d="M1 10L9 2l8 8" fill="#ffd84a" stroke="#8a5a00" strokeWidth="1.500" /><path d="M8 11h3v6H8z" fill="#f0a800" /></svg>,
  <svg viewBox="0 0 18 18" className="w-[18px] h-[18px]" strokeWidth=".8"><path d="M1 9l2-1.500 3 .5v8l-2 1-3-1z" fill="#1faa3a" stroke="#0b5a1a" /><path d="M6 7l2-2 3 .5V16l-2 1-3-1z" fill="#ffd028" stroke="#8a6200" /><path d="M11 3l2-2 4 2v12l-2 2-4-1z" fill="#6a9cf0" stroke="#1c3f94" /><path d="M2.500 9v6M7.500 7v8M13 4v11" stroke="#fff" /></svg>,
  <svg viewBox="0 0 18 18" className="w-[18px] h-[18px]"><path d="M1 5l2-2h4l1 2h7v3" fill="#f5c542" stroke="#9a6a00" /><path d="M1 5l3 10h10l3-8H7L4 15" fill="#ffe58a" stroke="#9a6a00" /></svg>,
  <svg viewBox="0 0 18 18" className="w-[18px] h-[18px]"><path d="M1.500 1.500h15v10h-15z" fill="#dfe8f6" stroke="#33415f" /><path d="M3 3h5v3H3zM3 8h5v2H3zM10 3h5v3h-5z" fill="#ffd028" stroke="#33415f" strokeWidth=".7" /><path d="M2 15h7M7 12.500L10 15l-3 2.500z" stroke="#00c" fill="#00c" /></svg>,
  <Beachball />,
  <HandSheet />,
];

const GraphicsArea = () => (
  <main className="relative flex-1 min-w-0 flex flex-col bg-white overflow-hidden">
    <Scene />
    <div className="relative flex items-center pl-16 pt-2 h-6 shrink-0">
      {viewTools.map((tool, i) => (
        <button key={i} className={`flex items-center gap-[7px] ${tool.menu ? 'w-[37px]' : 'w-[23px]'}`}>
          <Icon>{tool.icon}</Icon>
          {tool.menu && <svg viewBox="0 0 6 3" className="w-1.5 h-[3px]" fill="#6f7276"><path d="M0 0h6L3 3z" /></svg>}
        </button>
      ))}
    </div>
    <div className="relative flex items-center pl-0.5 mt-[7px] text-black whitespace-pre">
      <svg viewBox="0 0 14 9" className="w-3.5 h-[9px]" fill="none" stroke="#333"><path d="M.5.5h8v8h-8zM2.500 4.500h4M4.500 2.500v4M9 4.500h5" /></svg>
      <PartGlyph />
      <span className="ml-[3px]">零件2  (Default&lt; &lt;Default...</span>
    </div>
    <div className="relative flex flex-col self-end -mt-[11px]">
      {paneTabs.map((icon, i) => (
        <button key={i} className={`flex items-center justify-center w-6 h-6 border-l-2 border-b border-[#222] ${i === 0 ? 'border-t' : ''} ${i === 4 ? 'bg-[#e8ebf0]' : 'bg-[#a8a9ac]'}`}>
          {icon}
        </button>
      ))}
    </div>
  </main>
);

/* ---------- bottom bars ---------- */

const navPaths = ['M3 2v8M9 2v8L5 6z', 'M8 2v8L3 6z', 'M4 2v8l5-4z', 'M9 2v8M3 2v8l4-4z'];

const ModelTabs = () => (
  <div className="flex h-[15px] shrink-0 bg-[#e2e5eb] border-t border-[#222] text-[#111]">
    {navPaths.map((d) => (
      <button key={d} className="flex items-center justify-center w-4 ml-px bg-[#a8a9ac] border border-[#8b8d92]">
        <svg viewBox="0 0 12 12" className="w-3 h-3" fill="#808288" stroke="#808288"><path d={d} /></svg>
      </button>
    ))}
    <button className="w-[46px] bg-[#e2e5eb] border-x border-b border-[#222] leading-3">模型</button>
    <button className="w-[100px] bg-[#a8a9ac] border-r border-b border-[#222] leading-3 whitespace-nowrap">Motion Study 1</button>
  </div>
);

const StatusBar = () => (
  <footer className="flex items-center h-5 shrink-0 border-t border-[#222] bg-[#d7dae1] pl-0.5 text-[#111]">
    <span className="flex-1">选择引导线</span>
    <span className="w-[113px]">在编辑 零件</span>
    <span className="text-[#a4a6aa]">MMGS</span>
    <svg viewBox="0 0 6 3" className="w-1.5 h-[3px] ml-4" fill="#808288"><path d="M0 3h6L3 0z" /></svg>
    <button className="ml-4 w-3.5 h-3.5 border border-[#2a4d74] bg-[#eaf6ea] text-[#0a9a1a] text-xs leading-3 font-bold">?</button>
    <svg viewBox="0 0 16 16" className="w-4 h-4 ml-[50px]" strokeLinejoin="round">
      <path d="M2 8l6-6 5-1 2 2v4l-7 8-4 .5L1 12z" fill="#f5bd1c" stroke="#7a5200" />
      <path d="M3.500 9l5-5M6 12.500l5-5M5 10.500l5-5" stroke="#fff3b0" />
      <circle cx="12" cy="4" r="1.200" fill="#fff" stroke="#7a5200" strokeWidth=".6" />
    </svg>
    <svg viewBox="0 0 10 10" className="w-2.5 h-2.5 ml-4 self-end mb-1" fill="#b6b8bd"><path d="M7 1h2v2H7zM7 4h2v2H7zM4 4h2v2H4zM7 7h2v2H7zM4 7h2v2H4zM1 7h2v2H1z" /></svg>
  </footer>
);

export default function App() {
  return (
    <div className={`${FONT} relative min-h-screen flex flex-col p-[7px] pt-2 pb-[6px] text-xs leading-4 rounded-t-lg rounded-b-sm border border-[#3f4254] bg-linear-to-b from-[#e9ebf5] to-[#d3d6e6]`}>
      <TitleBar />
      <Ribbon />
      <div className="flex flex-1">
        <div className="flex flex-col flex-1 min-w-0 bg-[#d7dae1]">
          <CommandTabs />
          <div className="flex flex-1">
            <LeftToolbars />
            <div className="flex flex-col flex-1 min-w-0">
              <div className="flex flex-1">
                <PropertyManager />
                <GraphicsArea />
              </div>
              <ModelTabs />
            </div>
          </div>
        </div>
        <aside className="flex flex-col items-center w-[47px] shrink-0 bg-[#d7dae1] border-l border-[#9a9ca1] pt-1.5 pb-2">
          <Grip width="w-[38px]" />
          <div className="pt-1.5"><ToolStack groups={rightTools} /></div>
          <div className="w-[38px] mt-[3px] border-t border-[#85878b]" />
          <div className="mt-auto"><DoubleChevron /></div>
        </aside>
      </div>
      <StatusBar />
      <svg viewBox="0 0 700 678" className="absolute -left-px -top-px w-[700px] h-[678px] pointer-events-none z-20">
        <path d="M341 572L130 481" stroke="#f00" strokeWidth="2.500" />
        <path d="M117 475l19 0-5 11z" fill="#f00" stroke="#f00" />
      </svg>
    </div>
  );
}
